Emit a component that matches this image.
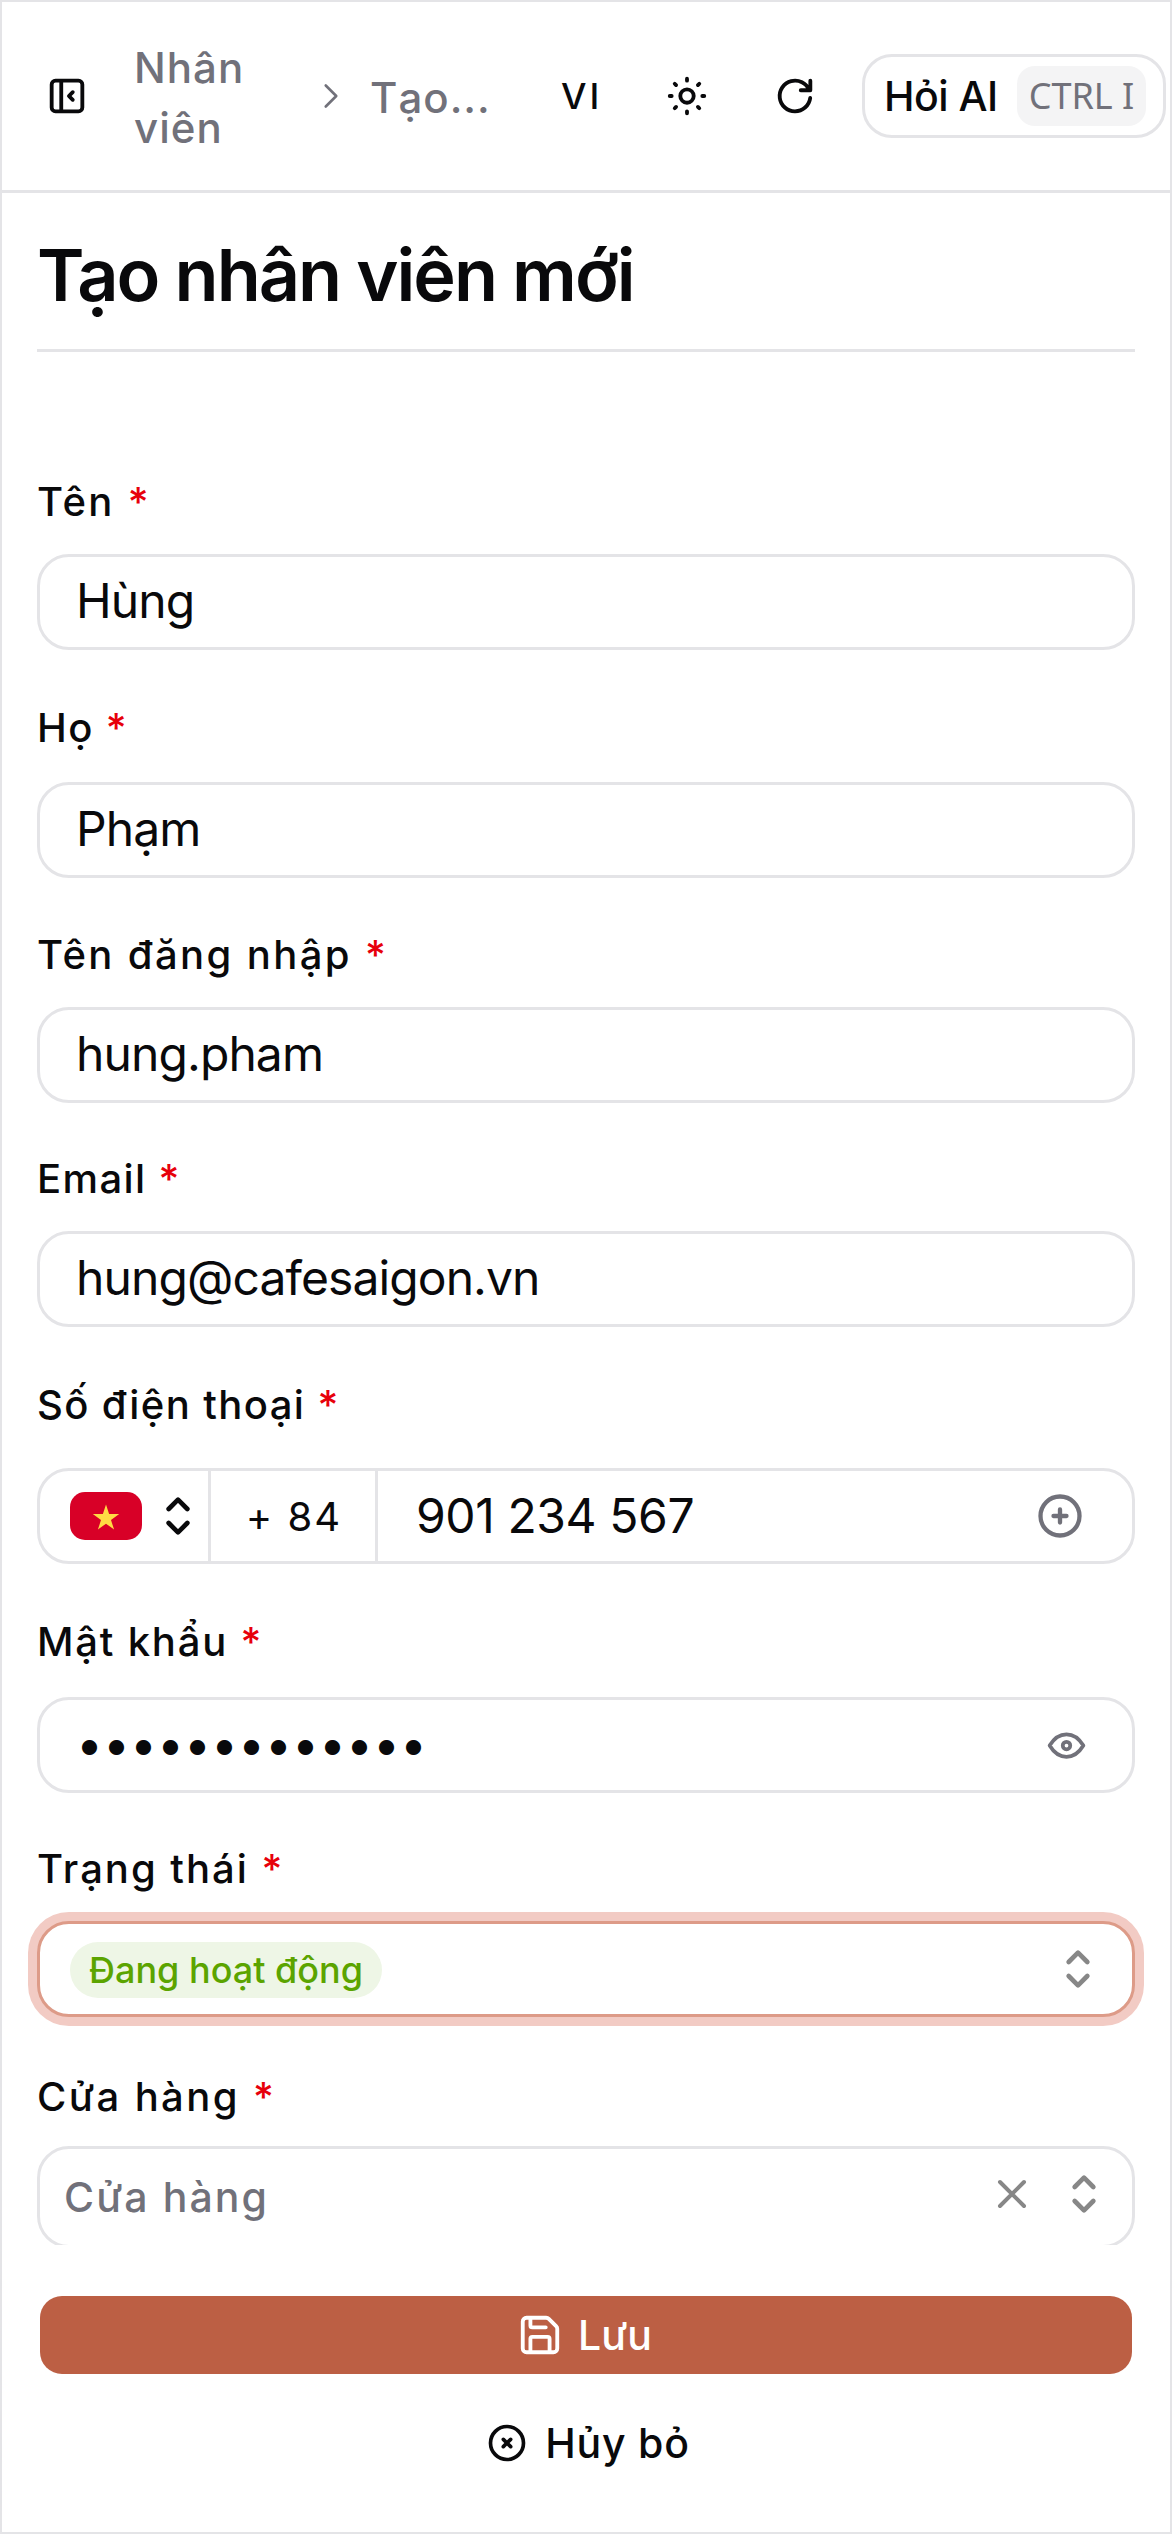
<div class="page">
  <header class="topbar">
    <button class="icon-btn" aria-label="sidebar">
      <svg viewBox="0 0 24 24" width="46" height="46"><path d="M4 6a2 2 0 0 1 2-2h12a2 2 0 0 1 2 2v12a2 2 0 0 1-2 2H6a2 2 0 0 1-2-2zM9 4v16M15 10l-2 2l2 2"/></svg>
    </button>
    <nav class="crumbs">
      <span class="crumb first">Nhân viên</span>
      <svg class="sep" viewBox="0 0 24 24" width="42" height="42"><path d="M9 6l6 6l-6 6"/></svg>
      <span class="crumb second">Tạo...</span>
    </nav>
    <span class="lang">VI</span>
    <button class="icon-btn" aria-label="theme">
      <svg viewBox="0 0 24 24" width="46" height="46"><path d="M8.5 12a3.5 3.5 0 1 0 7 0a3.5 3.5 0 1 0-7 0M3 12h1m8-9v1m8 8h1m-9 8v1M5.6 5.6l.7.7m12.1-.7l-.7.7m0 11.4l.7.7m-12.1-.7l-.7.7"/></svg>
    </button>
    <button class="icon-btn reload" aria-label="reload">
      <svg viewBox="0 0 24 24" width="46" height="46"><path d="M19.933 13.041a8 8 0 1 1-9.925-8.788c3.899-1 7.935 1.007 9.425 4.747M20 4v5h-5"/></svg>
    </button>
    <div class="ask">
      <span>Hỏi AI</span>
      <kbd>CTRL I</kbd>
    </div>
  </header>

  <main class="content">
    <h1>Tạo nhân viên mới</h1>
    <form>
      <div class="field after-48">
        <label class="wide">Tên <em>*</em></label>
        <div class="box"><input value="Hùng" /></div>
      </div>
      <div class="field">
        <label class="tight low">Họ <em>*</em></label>
        <div class="box"><input value="Phạm" /></div>
      </div>
      <div class="field after-46">
        <label class="wide">Tên đăng nhập <em>*</em></label>
        <div class="box"><input value="hung.pham" /></div>
      </div>
      <div class="field after-48">
        <label class="tight">Email <em>*</em></label>
        <div class="box"><input value="hung@cafesaigon.vn" /></div>
      </div>
      <div class="field after-48">
        <label class="tight phone-label">Số điện thoại <em>*</em></label>
        <div class="box phone">
          <div class="country">
            <svg class="flag" viewBox="0 0 72 48" width="72" height="48"><rect width="72" height="48" rx="15" fill="#d80027"/><path d="M36 12.5l3.1 9.6h10.1l-8.2 5.9 3.1 9.6-8.1-5.9-8.1 5.9 3.1-9.6-8.2-5.9h10.1z" fill="#ffda44"/></svg>
            <svg class="chev" viewBox="0 0 24 24" width="56" height="56"><path d="M8 9l4-4l4 4M16 15l-4 4l-4-4"/></svg>
          </div>
          <div class="code">+ 84</div>
          <input class="number" value="901 234 567" />
          <svg class="muted" viewBox="0 0 24 24" width="52" height="52"><path d="M3 12a9 9 0 1 0 18 0a9 9 0 0 0-18 0M9 12h6M12 9v6"/></svg>
        </div>
      </div>
      <div class="field after-46">
        <label class="mid high">Mật khẩu <em>*</em></label>
        <div class="box password"><input class="secret" type="password" value="1234567890123" />
          <svg class="muted" viewBox="0 0 24 24" width="45" height="45"><path d="M10 12a2 2 0 1 0 4 0a2 2 0 0 0-4 0M21 12c-2.4 4-5.4 6-9 6c-3.6 0-6.6-2-9-6c2.4-4 5.4-6 9-6c3.6 0 6.6 2 9 6"/></svg>
        </div>
      </div>
      <div class="field after-50">
        <label class="status">Trạng thái <em>*</em></label>
        <div class="box focused">
          <span class="badge">Đang hoạt động</span>
          <svg class="grey" viewBox="0 0 24 24" width="56" height="56"><path d="M8 9l4-4l4 4M16 15l-4 4l-4-4"/></svg>
        </div>
      </div>
      <div class="field">
        <label class="wide store-label">Cửa hàng <em>*</em></label>
        <div class="box store">
          <span class="placeholder">Cửa hàng</span>
          <svg class="grey" viewBox="0 0 24 24" width="48" height="48"><path d="M18 6L6 18M6 6l12 12"/></svg>
          <svg class="grey" viewBox="0 0 24 24" width="56" height="56"><path d="M8 9l4-4l4 4M16 15l-4 4l-4-4"/></svg>
        </div>
      </div>
    </form>
  </main>

  <footer class="actions">
    <button class="save">
      <svg viewBox="0 0 24 24" width="46" height="46"><path d="M15.2 3a2 2 0 0 1 1.4.6l3.8 3.8a2 2 0 0 1 .6 1.4V19a2 2 0 0 1-2 2H5a2 2 0 0 1-2-2V5a2 2 0 0 1 2-2zM17 21v-7a1 1 0 0 0-1-1H8a1 1 0 0 0-1 1v7M7 3v4a1 1 0 0 0 1 1h7"/></svg>
      Lưu
    </button>
    <button class="cancel">
      <svg viewBox="0 0 24 24" width="44" height="44"><path d="M3 12a9 9 0 1 0 18 0a9 9 0 0 0-18 0M10 10l4 4m0-4l-4 4"/></svg>
      Hủy bỏ
    </button>
  </footer>
</div>

<style>
  :global(body) {
    margin: 0;
    background: #fff;
  }
  .page {
    box-sizing: border-box;
    width: 1172px;
    height: 2534px;
    border: 2px solid #e4e4e7;
    display: flex;
    flex-direction: column;
    font-family: Inter, "Liberation Sans", sans-serif;
    color: #09090b;
    overflow: hidden;
  }
  svg {
    fill: none;
    stroke: currentColor;
    stroke-width: 2;
    stroke-linecap: round;
    stroke-linejoin: round;
    flex: none;
    display: block;
  }
  .flag, .flag path, .flag rect {
    stroke: none;
  }
  button {
    font: inherit;
    color: inherit;
    background: none;
    border: 0;
    padding: 0;
  }

  .topbar {
    height: 188px;
    flex: none;
    border-bottom: 3px solid #e4e4e7;
    display: flex;
    align-items: center;
    padding-left: 42px;
  }
  .crumbs {
    display: flex;
    align-items: center;
    flex: none;
    margin-left: 44px;
    color: #71717a;
    font-size: 42px;
    line-height: 60px;
    letter-spacing: 1px;
    font-weight: 500;
  }
  .crumb.first {
    width: 176px;
    padding-top: 3px;
  }
  .sep { stroke-width: 1.5; }
  .crumb.second {
    margin-left: 18px;
    width: 130px;
    padding-top: 3px;
    font-kerning: none;
  }
  .lang {
    margin-left: 61px;
    font-size: 36px;
    letter-spacing: 3px;
    font-weight: 500;
    width: 103px;
    flex: none;
  }
  .reload { margin-left: 62px; }
  .ask {
    margin-left: 44px;
    width: 304px;
    height: 84px;
    flex: none;
    box-sizing: border-box;
    border: 3px solid #e4e4e7;
    border-radius: 30px;
    display: flex;
    align-items: center;
    justify-content: space-between;
    padding: 0 17px 0 19px;
    font-size: 41px;
    font-weight: 500;
    letter-spacing: -0.5px;
    white-space: nowrap;
  }
  kbd {
    font-family: "Noto Sans", sans-serif;
    font-size: 36px;
    font-weight: 400;
    letter-spacing: 0;
    color: #71717a;
    background: #f4f4f5;
    border-radius: 18px;
    width: 129px;
    text-align: center;
    line-height: 60px;
  }

  .content {
    flex: 1;
    min-height: 0;
    overflow: hidden;
    padding: 0 35px;
  }
  h1 {
    margin: 0;
    height: 159px;
    box-sizing: border-box;
    border-bottom: 3px solid #e4e4e7;
    font-size: 72px;
    font-weight: 600;
    line-height: 163px;
    letter-spacing: -2px;
  }
  form {
    padding-top: 120px;
  }
  .field {
    margin-bottom: 47px;
  }
  .after-46 { margin-bottom: 46px; }
  .after-48 { margin-bottom: 48px; }
  .after-50 { margin-bottom: 50px; }
  label {
    display: block;
    font-size: 40px;
    line-height: 60px;
    font-weight: 450;
    letter-spacing: 1.5px;
    margin-bottom: 22px;
  }
  label.wide { letter-spacing: 2.4px; }
  label.status { letter-spacing: 2px; }
  label.mid { letter-spacing: 1.8px; }
  label.tight { letter-spacing: 1.4px; }
  label.low { margin-bottom: 24px; }
  label.high { margin-bottom: 25px; }
  label.store-label { margin-bottom: 19px; }
  label.phone-label { margin-bottom: 33px; }
  em {
    color: #e7000b;
    font-style: normal;
  }
  .box {
    height: 96px;
    box-sizing: border-box;
    border: 3px solid #e4e4e7;
    border-radius: 32px;
    display: flex;
    align-items: center;
    padding: 0 36px;
    background: #fff;
  }
  input {
    flex: 1;
    min-width: 0;
    border: 0;
    outline: 0;
    padding: 0 0 3px;
    background: none;
    font: inherit;
    font-size: 48px;
    letter-spacing: -0.9px;
    color: #09090b;
  }
  .secret {
    letter-spacing: 0;
  }
  .password {
    padding-right: 43px;
  }
  .muted {
    color: #71717a;
  }
  .phone {
    padding: 0 46px 0 0;
  }
  .country {
    width: 171px;
    height: 100%;
    flex: none;
    box-sizing: border-box;
    display: flex;
    align-items: center;
    padding-left: 30px;
    gap: 8px;
    border-right: 3px solid #e4e4e7;
  }
  .code {
    width: 167px;
    height: 100%;
    flex: none;
    box-sizing: border-box;
    border-right: 3px solid #e4e4e7;
    display: flex;
    align-items: center;
    justify-content: center;
    padding-left: 2px;
    font-size: 40px;
    letter-spacing: 2px;
  }
  .phone .number {
    padding: 0 0 1px 38px;
    letter-spacing: -0.4px;
  }
  .grey {
    color: #878787;
  }
  .focused {
    border-color: #dd9b88;
    box-shadow: 0 0 0 9px #f2cbc4;
    padding: 0 26px 0 30px;
    justify-content: space-between;
  }
  .badge {
    font-size: 36px;
    line-height: 56px;
    margin-top: 2px;
    padding: 0 19px;
    border-radius: 28px;
    background: #eef6e6;
    color: #5ba400;
    font-weight: 450;
  }
  .store {
    padding: 0 20px 0 24px;
    gap: 20px;
    height: 102px;
    align-items: flex-start;
  }
  .store svg {
    margin-top: 21px;
  }
  .store svg:last-child {
    margin-top: 17px;
  }
  .placeholder {
    flex: 1;
    font-size: 41px;
    line-height: 96px;
    color: #71717a;
    letter-spacing: 2.1px;
    font-weight: 500;
  }
  .actions {
    flex: none;
    height: 287px;
    box-sizing: border-box;
    padding: 51px 38px 0;
    display: flex;
    flex-direction: column;
  }
  .save {
    height: 78px;
    flex: none;
    box-sizing: border-box;
    padding-right: 3px;
    border-radius: 22px;
    background: #bc5f44;
    color: #fff;
    display: flex;
    align-items: center;
    justify-content: center;
    gap: 15px;
    font-size: 41px;
    font-weight: 500;
  }
  .cancel {
    margin-top: 30px;
    height: 78px;
    flex: none;
    box-sizing: border-box;
    padding-left: 3px;
    display: flex;
    align-items: center;
    justify-content: center;
    gap: 16px;
    font-size: 41px;
    letter-spacing: 0.8px;
    font-weight: 500;
  }
</style>
